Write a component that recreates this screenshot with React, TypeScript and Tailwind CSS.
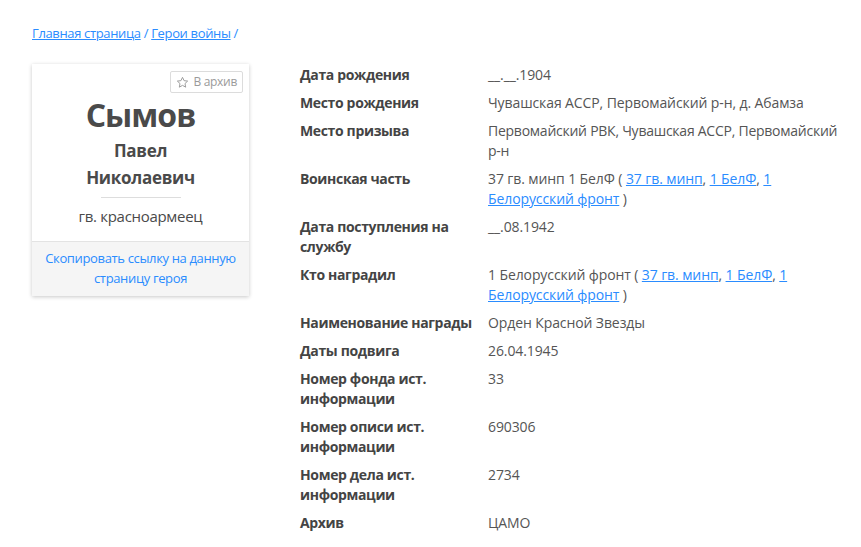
import React from 'react';

type Part = string | { link: string } | { keep: string };

type Row = {
  label: string;
  value: Part[];
  tight?: boolean;
};

const unitLinks: Part[] = [
  ' ( ',
  { link: '37 гв. минп' },
  ', ',
  { link: '1 БелФ' },
  ', ',
  { link: '1 Белорусский фронт' },
  ' )',
];

const rows: Row[] = [
  { label: 'Дата рождения', value: ['__.__.1904'] },
  { label: 'Место рождения', value: ['Чувашская АССР, Первомайский р-н, д. Абамза'] },
  {
    label: 'Место призыва',
    value: ['Первомайский РВК, Чувашская АССР, Первомайский ', { keep: 'р-н' }],
    tight: true,
  },
  { label: 'Воинская часть', value: ['37 гв. минп 1 БелФ', ...unitLinks] },
  { label: 'Дата поступления на службу', value: ['__.08.1942'] },
  { label: 'Кто наградил', value: ['1 Белорусский фронт', ...unitLinks] },
  { label: 'Наименование награды', value: ['Орден Красной Звезды'] },
  { label: 'Даты подвига', value: ['26.04.1945'] },
  { label: 'Номер фонда ист. информации', value: ['33'] },
  { label: 'Номер описи ист. информации', value: ['690306'] },
  { label: 'Номер дела ист. информации', value: ['2734'] },
  { label: 'Архив', value: ['ЦАМО'] },
];

const StarIcon = () => (
  <svg width="13" height="13" viewBox="0 0 24 24" fill="none" stroke="#9a9a9a" strokeWidth="1.8" strokeLinejoin="round">
    <path d="M12 2.5l2.9 6.1 6.6.8-4.9 4.6 1.3 6.6L12 17.3l-5.9 3.3 1.3-6.6-4.9-4.6 6.6-.8z" />
  </svg>
);

const HeroCard = () => (
  <div className="w-[217px] shrink-0 self-start bg-white shadow-[0_1px_4px_rgba(0,0,0,0.22)]">
    <div className="relative px-4 pt-[31px] pb-[14px] text-center text-[#4a4a4a]">
      <button className="absolute right-[6px] top-[7px] flex h-[22px] items-center gap-[4px] rounded-[2px] border border-[#dcdcdc] bg-white px-[5px] text-[12px] tracking-[-0.3px] text-[#9a9a9a]">
        <StarIcon />
        В архив
      </button>
      <div className="text-[32px] font-bold leading-[40px] tracking-[-1px]">Сымов</div>
      <div className="mt-[1.5px] text-[17px] font-bold leading-[27px] tracking-[-0.3px]">
        Павел
        <br />
        Николаевич
      </div>
      <div className="mx-auto mt-[6.5px] h-px w-[80px] bg-[#dddddd]" />
      <div className="mt-[7px] text-[15px] leading-[22px] tracking-[-0.3px]">гв. красноармеец</div>
    </div>
    <div className="border-t border-[#e3e3e3] bg-[#f5f5f5] px-2 pt-[6px] pb-[8px] text-center text-[13px] leading-[20px] tracking-[-0.35px] text-[#2a8cff]">
      Скопировать ссылку на данную страницу героя
    </div>
  </div>
);

export default function App() {
  return (
    <div className="min-h-[547px] bg-white pl-8 pt-[23px] font-['Open_Sans',sans-serif] text-[14px] text-[#444]">
      <div className="text-[13px] leading-[20px] tracking-[-0.35px] text-[#2a8cff]">
        <a className="underline">Главная страница</a>
        <span> / </span>
        <a className="underline">Герои войны</a>
        <span> /</span>
      </div>
      <div className="mt-[21px] flex items-start gap-[51px]">
        <HeroCard />
        <table className="-mt-[3px] w-[558px] shrink-0 border-collapse">
          <tbody>
            {rows.map((r) => (
              <tr key={r.label} className="align-top">
                <td className="w-[188px] py-[4px] pr-1 text-[14px] font-bold leading-[20px] tracking-[-0.35px] text-[#444]">
                  {r.label}
                </td>
                <td
                  className={
                    r.tight
                      ? 'py-[4px] text-[14px] leading-[20px] tracking-[-0.25px] text-[#555]'
                      : 'py-[4px] text-[14px] leading-[20px] tracking-[-0.1px] text-[#555]'
                  }
                >
                  {r.value.map((p, i) => {
                    if (typeof p === 'string') return <span key={i}>{p}</span>;
                    if ('keep' in p)
                      return (
                        <span key={i} className="whitespace-nowrap">
                          {p.keep}
                        </span>
                      );
                    return (
                      <a key={i} className="text-[#2a8cff] underline">
                        {p.link}
                      </a>
                    );
                  })}
                </td>
              </tr>
            ))}
          </tbody>
        </table>
      </div>
    </div>
  );
}
